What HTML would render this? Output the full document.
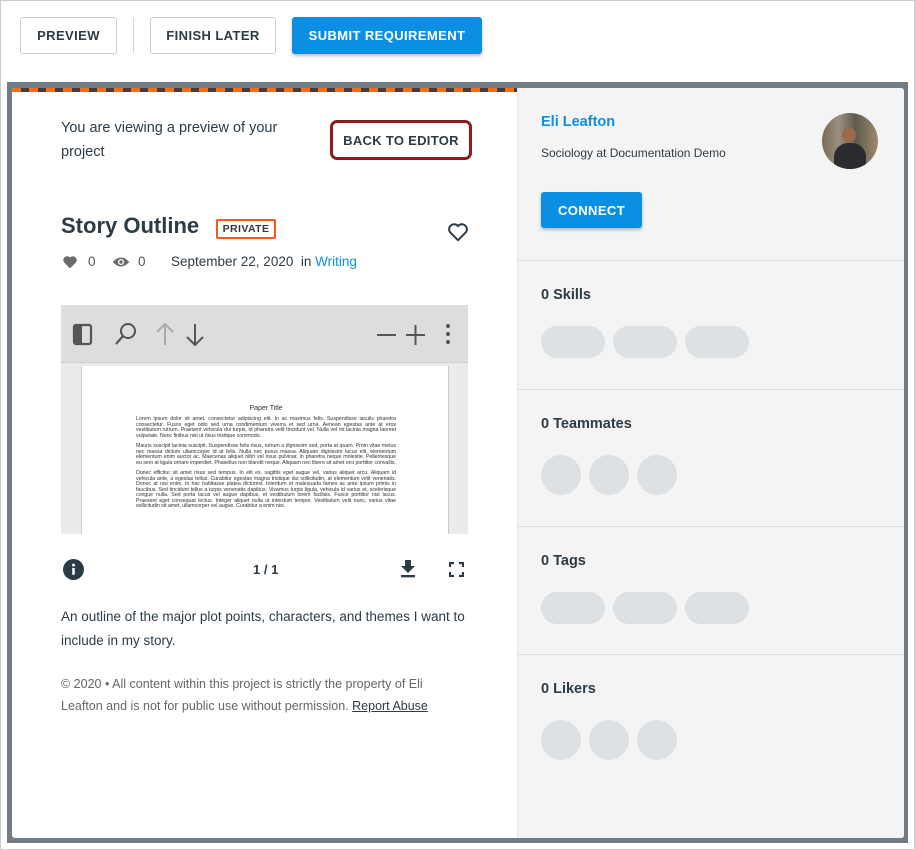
<!DOCTYPE html>
<html><head><style>
*{box-sizing:border-box;margin:0;padding:0}
body{width:915px;height:850px;background:#fff;font-family:"Liberation Sans",sans-serif;color:#2d3b45;position:relative;overflow:hidden}
.frame{position:absolute;left:0;top:0;width:915px;height:850px;border:1px solid #ccc;pointer-events:none}
.btn{position:absolute;top:17px;height:37px;border:1px solid #c7cdd1;border-radius:3px;font-size:13px;font-weight:bold;letter-spacing:.4px;display:flex;align-items:center;justify-content:center;color:#2d3b45;background:#fff}
.overlay{position:absolute;left:7px;top:82px;width:901px;height:761px;background:#737b83}
.card{position:absolute;left:12px;top:88px;width:892px;height:750px;background:#fff;border-radius:3px;overflow:hidden}
.stripe{position:absolute;left:0;top:0;width:505px;height:4px;background:repeating-linear-gradient(90deg,#ff6a13 0 9px,#4a3b3b 9px 17px)}
.right{position:absolute;left:505px;top:0;width:387px;height:750px;background:#f4f4f4;border-left:1px solid #e6e6e6}
.sec{position:absolute;left:0;width:387px;border-top:1px solid #ddd}
.sec h4{position:absolute;left:23px;font-size:14.5px;font-weight:bold;color:#2d3b45}
.pill{position:absolute;height:32px;width:64px;border-radius:16px;background:#dde1e4}
.circ{position:absolute;width:40px;height:40px;border-radius:50%;background:#dde1e4}
.a{position:absolute}
</style></head><body>
<div class="btn" style="left:20px;width:97px">PREVIEW</div>
<div class="a" style="left:133px;top:18px;width:1px;height:35px;background:#d5d9dc"></div>
<div class="btn" style="left:150px;width:126px">FINISH LATER</div>
<div class="btn" style="left:292px;width:190px;background:#0a8fe3;border-color:#0a8fe3;color:#fff;box-shadow:0 2px 3px rgba(0,0,0,.25)">SUBMIT REQUIREMENT</div>
<div class="overlay"></div>
<div class="card">
<div class="stripe"></div>
<div class="a" style="left:49px;top:28px;width:260px;font-size:14.5px;line-height:24px;color:#2d3b45">You are viewing a preview of your project</div>
<div class="a" style="left:318px;top:32px;width:142px;height:40px;border:3px solid #8a1c1c;border-radius:7px;font-size:13px;font-weight:bold;letter-spacing:.3px;display:flex;align-items:center;justify-content:center">BACK TO EDITOR</div>
<div class="a" style="left:49px;top:125px;font-size:22px;font-weight:bold;color:#2d3b45">Story Outline</div>
<div class="a" style="left:204px;top:131px;width:60px;height:20px;border:2px solid #f6581e;border-radius:2px;font-size:10.5px;font-weight:bold;letter-spacing:.4px;display:flex;align-items:center;justify-content:center">PRIVATE</div>
<svg class="a" style="left:435px;top:134px" width="22" height="20" viewBox="0 0 24 22"><path d="M12 20 L3.5 11.5 A5 5 0 0 1 12 4.5 A5 5 0 0 1 20.5 11.5 Z" fill="none" stroke="#2d3b45" stroke-width="2.2" stroke-linejoin="round"/></svg>
<svg class="a" style="left:50px;top:167px" width="16" height="14" viewBox="0 0 24 22"><path d="M12 21 L3 12 A5.3 5.3 0 0 1 12 4 A5.3 5.3 0 0 1 21 12 Z" fill="#6b6b6b"/></svg>
<div class="a" style="left:76px;top:166px;font-size:13.5px;color:#555">0</div>
<svg class="a" style="left:100px;top:167px" width="18" height="14" viewBox="0 0 24 16"><path d="M1 8 Q12 -4 23 8 Q12 20 1 8Z" fill="#6b6b6b"/><circle cx="12" cy="8" r="4" fill="#fff"/><circle cx="12" cy="8" r="2.3" fill="#6b6b6b"/></svg>
<div class="a" style="left:126px;top:166px;font-size:13.5px;color:#555">0</div>
<div class="a" style="left:159px;top:166px;font-size:13.5px;color:#2d3b45">September 22, 2020&nbsp; in <span style="color:#0a8fe3">Writing</span></div>
<div class="a" style="left:49px;top:217px;width:407px;height:229px;background:#ebebeb;overflow:hidden">
 <div class="a" style="left:0;top:0;width:407px;height:58px;background:#dddddd;border-bottom:1px solid #cfcfcf"></div>
 <svg class="a" style="left:10px;top:16px" width="400" height="28" viewBox="0 0 400 28">
  <rect x="3" y="4" width="17" height="19" rx="2" fill="none" stroke="#555" stroke-width="2.2"/><rect x="3" y="4" width="8" height="19" fill="#555"/>
  <circle cx="57" cy="10" r="7" fill="none" stroke="#555" stroke-width="2"/><path d="M52 15 L45 23" stroke="#555" stroke-width="2.2"/>
  <path d="M94 3 V24 M86 11 L94 3 L102 11" stroke="#aaa" stroke-width="2" fill="none"/>
  <path d="M124 3 V24 M116 16 L124 24 L132 16" stroke="#555" stroke-width="2" fill="none"/>
  <path d="M306 14 H325" stroke="#555" stroke-width="2"/><path d="M335 14 H354 M344.5 4 V24" stroke="#555" stroke-width="2"/>
  <circle cx="377" cy="5" r="2" fill="#555"/><circle cx="377" cy="13" r="2" fill="#555"/><circle cx="377" cy="21" r="2" fill="#555"/>
 </svg>
 <div class="a" style="left:20px;top:61px;width:368px;height:180px;background:#fff;border-left:1px solid #ccc;border-right:1px solid #ccc;font-size:5.3px;line-height:5.4px;color:#333;padding:0 52px 0 54px;text-align:justify;letter-spacing:-.05px">
  <div style="text-align:center;font-size:7px;margin:40px 0 6px">Paper Title</div>
  <p>Lorem ipsum dolor sit amet, consectetur adipiscing elit. In ac maximus felis. Suspendisse iaculis pharetra consectetur. Fusce eget odio sed urna condimentum viverra et sed urna. Aenean egestas ante at eros vestibulum rutrum. Praesent vehicula dui turpis, id pharetra velit tincidunt vel. Nulla vel mi lacinia magna laoreet vulputate. Nunc finibus nisl ut risus tristique commodo.</p><br>
  <p>Mauris suscipit lacinia suscipit. Suspendisse felis risus, rutrum a dignissim sed, porta at quam. Proin vitae metus nec massa dictum ullamcorper id at felis. Nulla nec purus massa. Aliquam dignissim lacus elit, elementum elementum enim auctor ac. Maecenas aliquet nibh vel risus pulvinar, in pharetra neque molestie. Pellentesque eu sem at ligula ornare imperdiet. Phasellus non blandit neque. Aliquam nec libero sit amet orci porttitor convallis.</p><br>
  <p>Donec efficitur sit amet risus sed tempus. In elit ex, sagittis eget augue vel, varius aliquet arcu. Aliquam id vehicula ante, a egestas tellus. Curabitur egestas magna tristique dui sollicitudin, at elementum velit venenatis. Donec at nisi enim. In hac habitasse platea dictumst. Interdum et malesuada fames ac ante ipsum primis in faucibus. Sed tincidunt tellus a turpis venenatis dapibus. Vivamus turpis ligula, vehicula id varius et, scelerisque congue nulla. Sed porta lacus vel augue dapibus, et vestibulum lorem facilisis. Fusce porttitor nisl lacus. Praesent eget consequat lectus. Integer aliquet nulla ut interdum tempor. Vestibulum velit nunc, varius vitae sollicitudin sit amet, ullamcorper vel augue. Curabitur a enim nisi.</p>
 </div>
</div>
<svg class="a" style="left:51px;top:471px" width="21" height="21" viewBox="0 0 20 20"><circle cx="10" cy="10" r="10" fill="#2d3b45"/><rect x="8.8" y="8.5" width="2.4" height="6.5" fill="#fff"/><circle cx="10" cy="5.8" r="1.4" fill="#fff"/></svg>
<div class="a" style="left:241px;top:474px;font-size:13px;font-weight:bold">1 / 1</div>
<svg class="a" style="left:388px;top:471px" width="16" height="20" viewBox="0 0 16 20"><path d="M5 1 H11 V7 H15 L8 14 L1 7 H5Z" fill="#2d3b45"/><rect x="1" y="16" width="14" height="2.3" fill="#2d3b45"/></svg>
<svg class="a" style="left:437px;top:474px" width="15" height="15" viewBox="0 0 15 15"><path d="M1 5 V1 H5 M10 1 H14 V5 M14 10 V14 H10 M5 14 H1 V10" fill="none" stroke="#2d3b45" stroke-width="2.2"/></svg>
<div class="a" style="left:49px;top:517px;width:420px;font-size:13.5px;line-height:24px;color:#2d3b45">An outline of the major plot points, characters, and themes I want to include in my story.</div>
<div class="a" style="left:49px;top:585px;width:400px;font-size:12.5px;line-height:22px;color:#666">© 2020 • All content within this project is strictly the property of Eli Leafton and is not for public use without permission. <span style="text-decoration:underline;color:#2d3b45">Report Abuse</span></div>
<div class="right">
 <div class="a" style="left:23px;top:26px;font-size:14.5px;font-weight:bold;color:#0a8fe3">Eli Leafton</div>
 <div class="a" style="left:23px;top:58px;font-size:12px;color:#2d3b45">Sociology at Documentation Demo</div>
 <div class="a" style="left:304px;top:25px;width:56px;height:56px;border-radius:50%;overflow:hidden;background:linear-gradient(90deg,#7a6a55,#9a8f80 30%,#5d5a4d 60%,#a08a6a)">
  <div class="a" style="left:20px;top:14px;width:14px;height:16px;border-radius:50%;background:#9a6a4c"></div>
  <div class="a" style="left:12px;top:30px;width:32px;height:30px;border-radius:45% 45% 0 0;background:#2a2c30"></div>
 </div>
 <div class="a" style="left:23px;top:104px;width:101px;height:36px;background:#0a8fe3;border-radius:3px;color:#fff;font-weight:bold;font-size:13px;letter-spacing:.4px;display:flex;align-items:center;justify-content:center;box-shadow:0 2px 3px rgba(0,0,0,.25)">CONNECT</div>
 <div class="sec" style="top:172px;height:130px"><h4 style="top:26px">0 Skills</h4><div class="pill" style="left:23px;top:65px"></div><div class="pill" style="left:95px;top:65px"></div><div class="pill" style="left:167px;top:65px"></div></div>
 <div class="sec" style="top:301px;height:138px"><h4 style="top:26px">0 Teammates</h4><div class="circ" style="left:23px;top:65px"></div><div class="circ" style="left:71px;top:65px"></div><div class="circ" style="left:119px;top:65px"></div></div>
 <div class="sec" style="top:438px;height:129px"><h4 style="top:26px">0 Tags</h4><div class="pill" style="left:23px;top:65px"></div><div class="pill" style="left:95px;top:65px"></div><div class="pill" style="left:167px;top:65px"></div></div>
 <div class="sec" style="top:566px;height:184px"><h4 style="top:26px">0 Likers</h4><div class="circ" style="left:23px;top:65px"></div><div class="circ" style="left:71px;top:65px"></div><div class="circ" style="left:119px;top:65px"></div></div>
</div>
</div>
<div class="frame"></div>
</body></html>
